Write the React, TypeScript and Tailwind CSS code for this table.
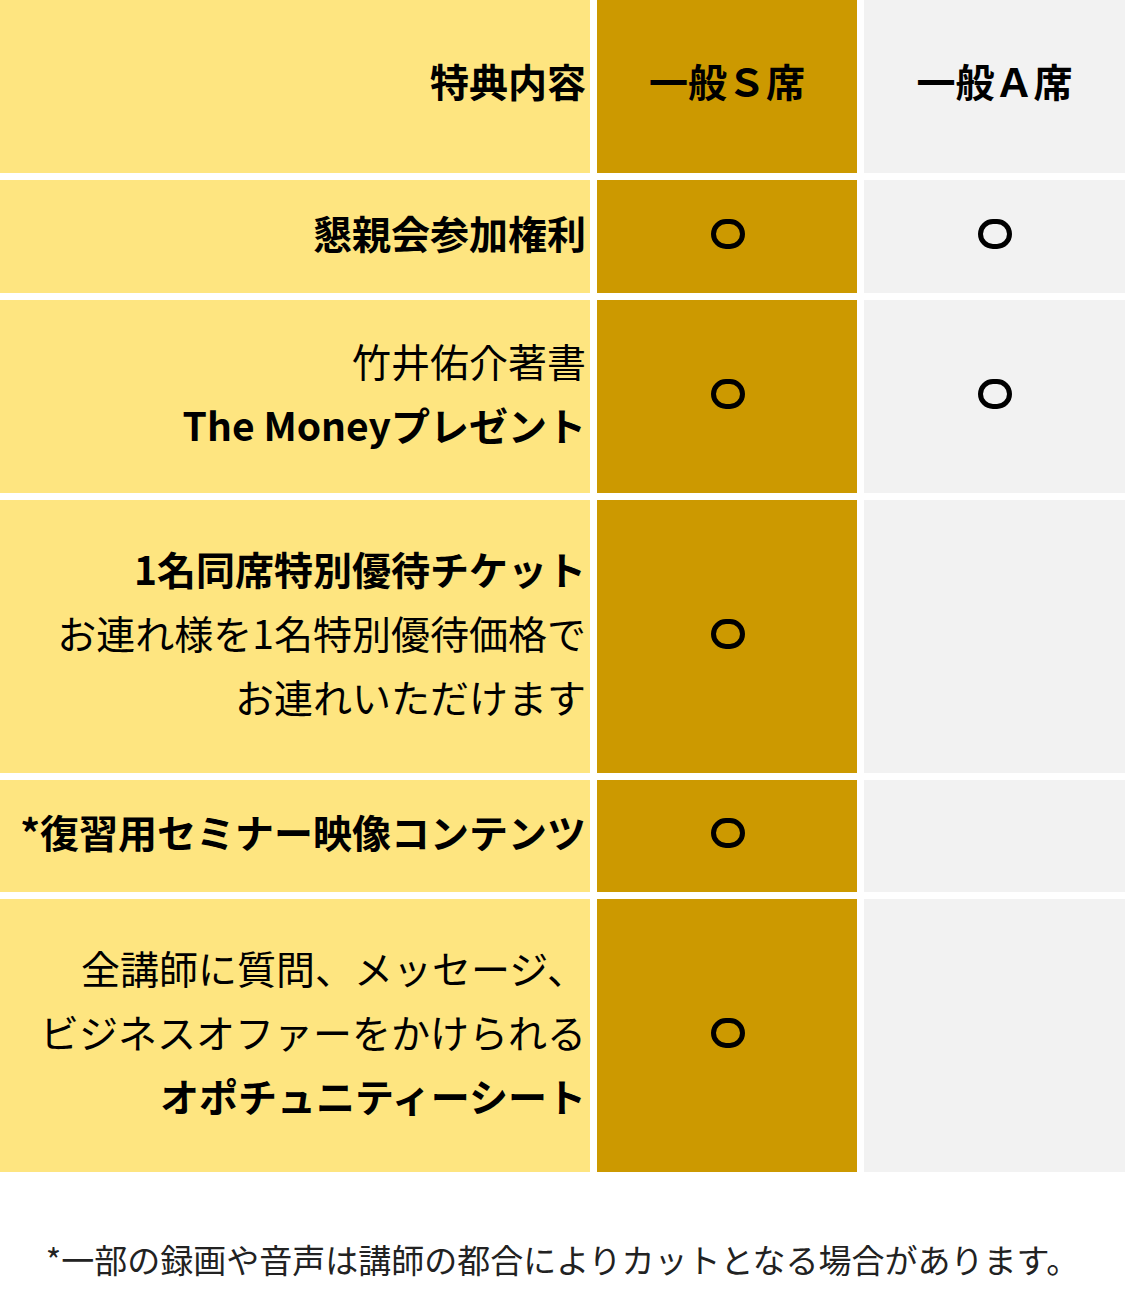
const font = { fontFamily: '"Noto Sans CJK JP", "Noto Sans", sans-serif' };

type Row = {
  lines: { text: string; bold?: boolean }[];
  s: boolean;
  a: boolean;
  h: string;
};

const rows: Row[] = [
  { lines: [{ text: '懇親会参加権利', bold: true }], s: true, a: true, h: 'h-[113px]' },
  {
    lines: [{ text: '竹井佑介著書' }, { text: 'The Moneyプレゼント', bold: true }],
    s: true,
    a: true,
    h: 'h-[193px]',
  },
  {
    lines: [
      { text: '1名同席特別優待チケット', bold: true },
      { text: 'お連れ様を1名特別優待価格で' },
      { text: 'お連れいただけます' },
    ],
    s: true,
    a: false,
    h: 'h-[273px]',
  },
  { lines: [{ text: '*復習用セミナー映像コンテンツ', bold: true }], s: true, a: false, h: 'h-[112px]' },
  {
    lines: [
      { text: '全講師に質問、メッセージ、' },
      { text: 'ビジネスオファーをかけられる' },
      { text: 'オポチュニティーシート', bold: true },
    ],
    s: true,
    a: false,
    h: 'h-[273px]',
  },
];

// bold ring used as the "included" mark
const Mark = () => <div className="w-[34px] h-[30px] rounded-full border-[5px] border-black" />;

export default function App() {
  return (
    <div className="w-[1125px] bg-white text-black" style={font}>
      <div className="grid grid-cols-[590px_260px_1fr] gap-[7px]">
        {/* Header */}
        <div className="h-[173px] bg-[#fee580] flex items-center justify-end pr-[4px] pb-[12px] text-[39px] font-bold">
          特典内容
        </div>
        <div className="h-[173px] bg-[#cc9900] flex items-center justify-center pb-[12px] text-[39px] font-bold">
          一般Ｓ席
        </div>
        <div className="h-[173px] bg-[#f2f2f2] flex items-center justify-center pb-[12px] text-[39px] font-bold">
          一般Ａ席
        </div>

        {rows.map((row, i) => (
          <div key={i} className="contents">
            <div className={`${row.h} bg-[#fee580] flex flex-col items-end justify-center pr-[4px] pb-[10px] text-[39px] leading-[64px]`}>
              {row.lines.map((l, j) => (
                <div key={j} className={l.bold ? 'font-bold' : 'font-normal'}>
                  {l.text}
                </div>
              ))}
            </div>
            <div className={`${row.h} bg-[#cc9900] flex items-center justify-center pb-[6px] pl-[2px]`}>{row.s && <Mark />}</div>
            <div className={`${row.h} bg-[#f2f2f2] flex items-center justify-center pb-[6px]`}>{row.a && <Mark />}</div>
          </div>
        ))}
      </div>

      <p className="pt-[67px] pb-[13px] text-center text-[33px] leading-[40px] text-[#222]">
        *一部の録画や音声は講師の都合によりカットとなる場合があります。
      </p>
    </div>
  );
}
